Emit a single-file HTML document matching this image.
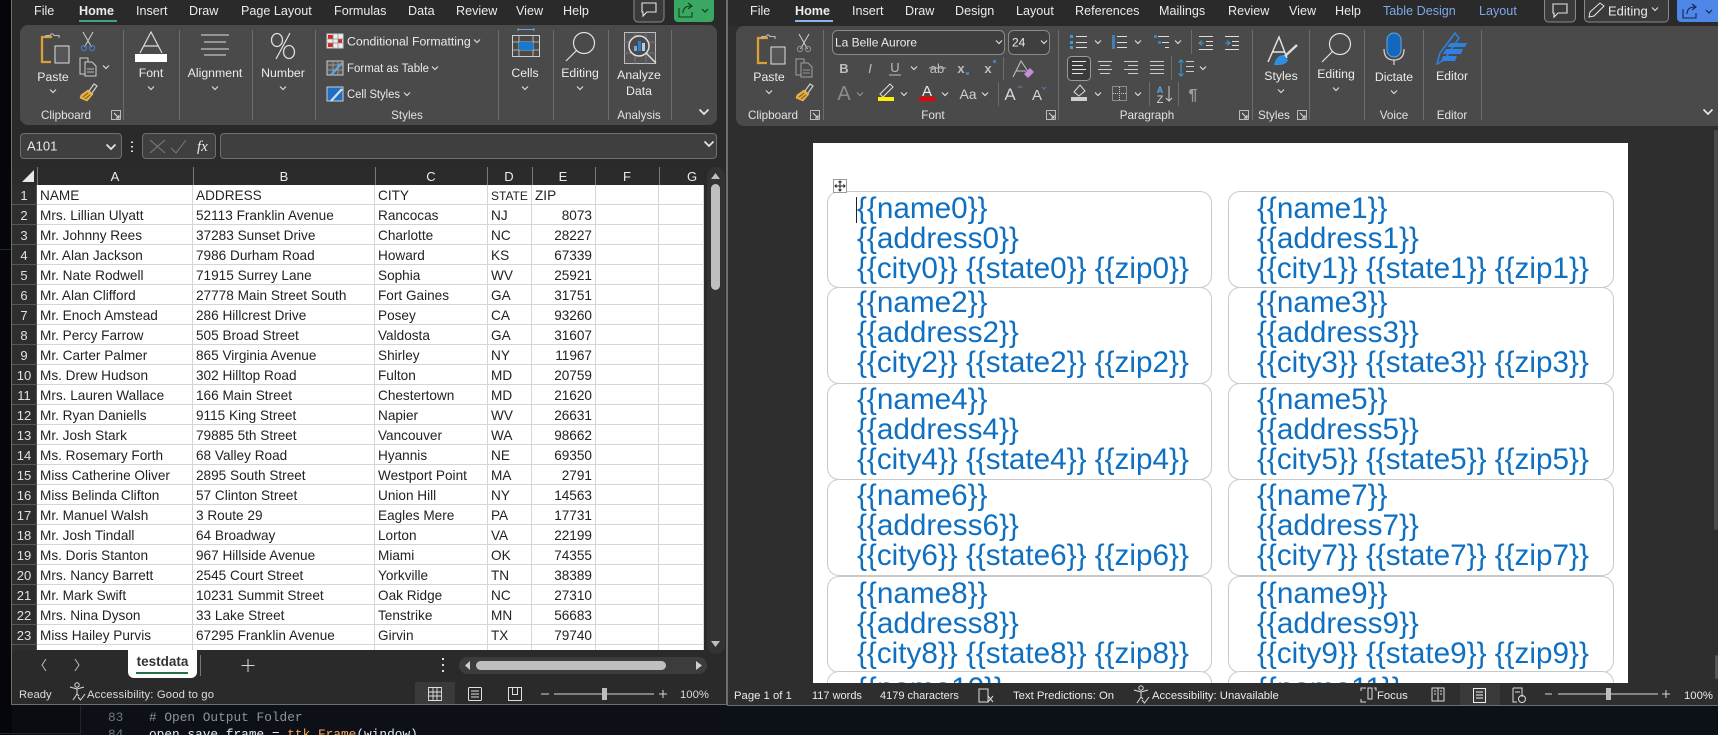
<!DOCTYPE html>
<html lang="en"><head><meta charset="utf-8"><title>Excel and Word</title>
<style>
html,body{margin:0;padding:0;background:#0c1118;width:1718px;height:735px;overflow:hidden}
body{position:relative;font-family:"Liberation Sans",sans-serif}
.a{position:absolute}
table{border-collapse:separate;border-spacing:0;table-layout:fixed;position:absolute;left:0;top:0;width:692px}
tr{height:20px}
td{height:20px;padding:3px 0 0 3px;font-size:13.6px;line-height:16px;color:#222;border-right:1px solid #d5d5d5;border-bottom:1px solid #d5d5d5;white-space:nowrap;overflow:hidden;box-sizing:border-box;vertical-align:top}
td.n{background:#2e2e2e;color:#e2e2e2;text-align:center;padding:3px 0 0 0;border-right:1px solid #555;border-bottom:1px solid #555;font-size:13px}
td.r{text-align:right;padding:3px 3px 0 0}
.lab{position:absolute;border:1px solid #c9c9c9;border-radius:12px;box-sizing:border-box;background:#fff}
.t{position:absolute;font-size:29.7px;line-height:30px;color:#0f6fc0;white-space:pre}
svg text{font-family:"Liberation Sans",sans-serif;fill:#ebebeb}
.tab{font-size:12.6px}.ui{font-size:12.3px}.gl{font-size:11.7px;fill:#e2e2e2}.st{font-size:11.3px;fill:#dcdcdc}
.m{text-anchor:middle}
.mono{font-family:"Liberation Mono",monospace!important;font-size:12.8px}
</style></head><body>

<!-- base backgrounds -->
<div class="a" style="left:0;top:0;width:12px;height:735px;background:#04060a"></div>
<div class="a" style="left:0;top:249px;width:12px;height:1px;background:#23272e"></div>
<div class="a" style="left:12px;top:705px;width:68px;height:30px;background:#090c11"></div>
<div class="a" style="left:80px;top:705px;width:647px;height:30px;background:#0d1117;border-left:1px solid #21262d"></div>
<div class="a" style="left:0;top:733px;width:80px;height:1px;background:#23272e"></div>

<!-- Excel window -->
<div class="a" style="left:11px;top:0;width:716px;height:705px;background:#2a2a2a;border:solid #6e6e6e;border-width:0 1px 1px 1px;box-sizing:border-box"></div>
<div class="a" style="left:20px;top:25px;width:697px;height:100px;background:#4a4a4a;border-radius:8px"></div>
<div class="a" style="left:20px;top:133px;width:102px;height:26px;background:#3f3f3f;border:1px solid #6f6f6f;border-radius:4px;box-sizing:border-box"></div>
<div class="a" style="left:142px;top:133px;width:74px;height:26px;background:#3f3f3f;border:1px solid #6f6f6f;border-radius:4px;box-sizing:border-box"></div>
<div class="a" style="left:220px;top:133px;width:497px;height:26px;background:#3f3f3f;border:1px solid #6f6f6f;border-radius:4px;box-sizing:border-box"></div>

<!-- grid -->
<div class="a" style="left:12px;top:167px;width:692px;height:18px;background:#2b2b2b"></div>
<div class="a" style="left:12px;top:185px;width:692px;height:465px;overflow:hidden;background:#fff">
<table><colgroup><col style="width:25px"><col style="width:156px"><col style="width:182px"><col style="width:113px"><col style="width:44px"><col style="width:64px"><col style="width:63px"><col style="width:45px"></colgroup>
<tr><td class="n">1</td><td>NAME</td><td>ADDRESS</td><td>CITY</td><td style="font-size:12px">STATE</td><td>ZIP</td><td></td><td></td></tr>
<tr><td class="n">2</td><td>Mrs. Lillian Ulyatt</td><td>52113 Franklin Avenue</td><td>Rancocas</td><td>NJ</td><td class="r">8073</td><td></td><td></td></tr>
<tr><td class="n">3</td><td>Mr. Johnny Rees</td><td>37283 Sunset Drive</td><td>Charlotte</td><td>NC</td><td class="r">28227</td><td></td><td></td></tr>
<tr><td class="n">4</td><td>Mr. Alan Jackson</td><td>7986 Durham Road</td><td>Howard</td><td>KS</td><td class="r">67339</td><td></td><td></td></tr>
<tr><td class="n">5</td><td>Mr. Nate Rodwell</td><td>71915 Surrey Lane</td><td>Sophia</td><td>WV</td><td class="r">25921</td><td></td><td></td></tr>
<tr><td class="n">6</td><td>Mr. Alan Clifford</td><td>27778 Main Street South</td><td>Fort Gaines</td><td>GA</td><td class="r">31751</td><td></td><td></td></tr>
<tr><td class="n">7</td><td>Mr. Enoch Amstead</td><td>286 Hillcrest Drive</td><td>Posey</td><td>CA</td><td class="r">93260</td><td></td><td></td></tr>
<tr><td class="n">8</td><td>Mr. Percy Farrow</td><td>505 Broad Street</td><td>Valdosta</td><td>GA</td><td class="r">31607</td><td></td><td></td></tr>
<tr><td class="n">9</td><td>Mr. Carter Palmer</td><td>865 Virginia Avenue</td><td>Shirley</td><td>NY</td><td class="r">11967</td><td></td><td></td></tr>
<tr><td class="n">10</td><td>Ms. Drew Hudson</td><td>302 Hilltop Road</td><td>Fulton</td><td>MD</td><td class="r">20759</td><td></td><td></td></tr>
<tr><td class="n">11</td><td>Mrs. Lauren Wallace</td><td>166 Main Street</td><td>Chestertown</td><td>MD</td><td class="r">21620</td><td></td><td></td></tr>
<tr><td class="n">12</td><td>Mr. Ryan Daniells</td><td>9115 King Street</td><td>Napier</td><td>WV</td><td class="r">26631</td><td></td><td></td></tr>
<tr><td class="n">13</td><td>Mr. Josh Stark</td><td>79885 5th Street</td><td>Vancouver</td><td>WA</td><td class="r">98662</td><td></td><td></td></tr>
<tr><td class="n">14</td><td>Ms. Rosemary Forth</td><td>68 Valley Road</td><td>Hyannis</td><td>NE</td><td class="r">69350</td><td></td><td></td></tr>
<tr><td class="n">15</td><td>Miss Catherine Oliver</td><td>2895 South Street</td><td>Westport Point</td><td>MA</td><td class="r">2791</td><td></td><td></td></tr>
<tr><td class="n">16</td><td>Miss Belinda Clifton</td><td>57 Clinton Street</td><td>Union Hill</td><td>NY</td><td class="r">14563</td><td></td><td></td></tr>
<tr><td class="n">17</td><td>Mr. Manuel Walsh</td><td>3 Route 29</td><td>Eagles Mere</td><td>PA</td><td class="r">17731</td><td></td><td></td></tr>
<tr><td class="n">18</td><td>Mr. Josh Tindall</td><td>64 Broadway</td><td>Lorton</td><td>VA</td><td class="r">22199</td><td></td><td></td></tr>
<tr><td class="n">19</td><td>Ms. Doris Stanton</td><td>967 Hillside Avenue</td><td>Miami</td><td>OK</td><td class="r">74355</td><td></td><td></td></tr>
<tr><td class="n">20</td><td>Mrs. Nancy Barrett</td><td>2545 Court Street</td><td>Yorkville</td><td>TN</td><td class="r">38389</td><td></td><td></td></tr>
<tr><td class="n">21</td><td>Mr. Mark Swift</td><td>10231 Summit Street</td><td>Oak Ridge</td><td>NC</td><td class="r">27310</td><td></td><td></td></tr>
<tr><td class="n">22</td><td>Mrs. Nina Dyson</td><td>33 Lake Street</td><td>Tenstrike</td><td>MN</td><td class="r">56683</td><td></td><td></td></tr>
<tr><td class="n">23</td><td>Miss Hailey Purvis</td><td>67295 Franklin Avenue</td><td>Girvin</td><td>TX</td><td class="r">79740</td><td></td><td></td></tr>
<tr><td class="n"></td><td></td><td></td><td></td><td></td><td></td><td></td><td></td></tr>
</table></div>

<!-- sheet tab / scrollbars -->
<div class="a" style="left:128px;top:650px;width:69px;height:28px;background:#fff;border-radius:0 0 6px 6px"></div>
<div class="a" style="left:136px;top:672px;width:52px;height:2px;background:#217346"></div>
<div class="a" style="left:128px;top:654px;width:69px;text-align:center;font-size:13.5px;font-weight:bold;color:#333">testdata</div>
<div class="a" style="left:459px;top:657px;width:248px;height:17px;background:#3c3c3c;border-radius:9px"></div>
<div class="a" style="left:476px;top:661px;width:190px;height:9px;background:#bfbfbf;border-radius:5px"></div>
<div class="a" style="left:707px;top:167px;width:18px;height:487px;background:#333;border-radius:9px"></div>
<div class="a" style="left:711px;top:184px;width:9px;height:106px;background:#bfbfbf;border-radius:5px"></div>
<div class="a" style="left:415px;top:682px;width:40px;height:22px;background:#3a3a3a"></div>

<!-- Word window -->
<div class="a" style="left:727px;top:0;width:991px;height:706px;background:#2e2e2e;border:solid #6e6e6e;border-width:0 0 1px 1px;box-sizing:border-box"></div>
<div class="a" style="left:728px;top:0;width:990px;height:26px;background:#2a2a2a"></div>
<div class="a" style="left:736px;top:26px;width:982px;height:100px;background:#4a4a4a;border-radius:8px 0 0 8px"></div>
<div class="a" style="left:813px;top:143px;width:815px;height:540px;background:#fff;overflow:hidden">
<div class="lab" style="left:14px;top:48px;width:385px;height:97px"></div><div class="lab" style="left:415px;top:48px;width:386px;height:97px"></div>
<div class="lab" style="left:14px;top:144px;width:385px;height:97px"></div><div class="lab" style="left:415px;top:144px;width:386px;height:97px"></div>
<div class="lab" style="left:14px;top:240px;width:385px;height:97px"></div><div class="lab" style="left:415px;top:240px;width:386px;height:97px"></div>
<div class="lab" style="left:14px;top:336px;width:385px;height:97px"></div><div class="lab" style="left:415px;top:336px;width:386px;height:97px"></div>
<div class="lab" style="left:14px;top:433px;width:385px;height:97px"></div><div class="lab" style="left:415px;top:433px;width:386px;height:97px"></div>
<div class="lab" style="left:14px;top:528px;width:385px;height:97px"></div><div class="lab" style="left:415px;top:528px;width:386px;height:97px"></div>
<div class="t" style="left:44px;top:51px">{{name0}}
{{address0}}
{{city0}} {{state0}} {{zip0}}</div>
<div class="t" style="left:444px;top:51px">{{name1}}
{{address1}}
{{city1}} {{state1}} {{zip1}}</div>
<div class="t" style="left:44px;top:145px">{{name2}}
{{address2}}
{{city2}} {{state2}} {{zip2}}</div>
<div class="t" style="left:444px;top:145px">{{name3}}
{{address3}}
{{city3}} {{state3}} {{zip3}}</div>
<div class="t" style="left:44px;top:242px">{{name4}}
{{address4}}
{{city4}} {{state4}} {{zip4}}</div>
<div class="t" style="left:444px;top:242px">{{name5}}
{{address5}}
{{city5}} {{state5}} {{zip5}}</div>
<div class="t" style="left:44px;top:338px">{{name6}}
{{address6}}
{{city6}} {{state6}} {{zip6}}</div>
<div class="t" style="left:444px;top:338px">{{name7}}
{{address7}}
{{city7}} {{state7}} {{zip7}}</div>
<div class="t" style="left:44px;top:436px">{{name8}}
{{address8}}
{{city8}} {{state8}} {{zip8}}</div>
<div class="t" style="left:444px;top:436px">{{name9}}
{{address9}}
{{city9}} {{state9}} {{zip9}}</div>
<div class="t" style="left:44px;top:531px">{{name10}}</div>
<div class="t" style="left:444px;top:531px">{{name11}}</div>
<div class="a" style="left:43px;top:54px;width:1px;height:26px;background:#222"></div>
<div class="a" style="left:20px;top:36px;width:14px;height:14px;border:1px solid #999;box-sizing:border-box;background:#fff"></div>
<svg class="a" style="left:20px;top:36px" width="14" height="14"><path d="M7 2V12M2 7H12M5.500 3.500L7 2L8.500 3.500M5.500 10.500L7 12L8.500 10.500M3.500 5.500L2 7L3.500 8.500M10.500 5.500L12 7L10.500 8.500" fill="none" stroke="#222" stroke-width="1"/></svg>
</div>
<div class="a" style="left:1460px;top:684px;width:40px;height:21px;background:#3a3a3a"></div>
<div class="a" style="left:1714px;top:130px;width:4px;height:400px;background:#4a4a4a;border-radius:2px"></div>
<div class="a" style="left:1715px;top:655px;width:3px;height:24px;background:#555;border-radius:2px"></div>

<!-- Overlay: chrome text and icons -->
<svg class="a" style="left:0;top:0" width="1718" height="735" viewBox="0 0 1718 735">
<defs>
<path id="c" d="M-3 -1.500L0 1.500L3 -1.500" fill="none" stroke="#d8d8d8" stroke-width="1.200"/>
<path id="c2" d="M-4.500 -2.500L0 2L4.500 -2.500" fill="none" stroke="#e6e6e6" stroke-width="1.700"/>
<g id="lch"><path d="M-4.500 -4.500H4.500V4.500M-4.500 -4.500V4.500H4.500" fill="none" stroke="#bbb" stroke-width="1"/><path d="M-2 -2L3 3M0 3H3V0" fill="none" stroke="#ddd" stroke-width="1"/></g>
<g id="cut"><path d="M-5 -11L3.500 4M5 -11L-3.500 4" fill="none" stroke="#c8c8c8" stroke-width="1.100"/></g>
<g id="copy"><path d="M-8 -9H0L0 7H-8Z" fill="none" stroke="#cfcfcf"/><path d="M-3 -5H4L8 -1V9H-3Z" fill="#4a4a4a" stroke="#cfcfcf"/><path d="M-1 2H6M-1 5H6" stroke="#bbb"/></g>
<g id="brush"><path d="M1 -2L6 -9L9 -7L4 0" fill="none" stroke="#cfcfcf" stroke-width="1.200"/><path d="M-7 2L0 -3L5 1L-1 8L-8 5Z" fill="#e6a938" stroke="#f3c76a" stroke-width=".6"/><path d="M-5 4L0 0M-3 6L2 2" stroke="#7a5b22"/></g>
<g id="paste"><path d="M10 -12H0V13H9" fill="none" stroke="#dca032" stroke-width="2.300"/><path d="M4 -11V-13.500H8Q10 -17 12 -13.500H17V-11" fill="none" stroke="#bdbdbd" stroke-width="1.100"/><rect x="13" y="-3" width="14" height="17" fill="#555" stroke="#e0e0e0"/></g>
<g id="mag"><circle cx="0" cy="0" r="10.500" fill="none" stroke="#e2e2e2" stroke-width="1.200"/><path d="M-7.500 7.500L-18 18" fill="none" stroke="#e2e2e2" stroke-width="1.200"/></g>
<g id="cmt"><path d="M-7 -6H7V3H-2L-6 7V3H-7Z" fill="none" stroke="#e6e6e6" stroke-width="1.100"/></g>
<g id="shr"><path d="M-7 -2V7H6V2" fill="none" stroke="currentColor" stroke-width="1.100"/><path d="M-3 3Q-3 -4 5 -4M2 -7L6 -4L2 -1" fill="none" stroke="currentColor" stroke-width="1.100"/></g>
<g id="acc"><circle cx="0" cy="-7" r="2.200" fill="none" stroke="#ddd"/><path d="M-7 -5L0 -3L7 -5M0 -3V2L-4 8M0 2L2 4" fill="none" stroke="#ddd"/><path d="M1 5L3.500 8L8 2" fill="none" stroke="#ddd"/></g>
</defs>

<!-- Excel tabs -->
<g class="tab">
<text x="34" y="15">File</text><text x="79" y="15" font-weight="bold">Home</text><text x="136" y="15">Insert</text><text x="189" y="15">Draw</text><text x="241" y="15">Page Layout</text><text x="334" y="15">Formulas</text><text x="408" y="15">Data</text><text x="456" y="15">Review</text><text x="516" y="15">View</text><text x="563" y="15">Help</text>
</g>
<rect x="79" y="20" width="38" height="2" fill="#46a37a"/>
<rect x="634" y="-3" width="30" height="25" rx="4" fill="#3a3a3a" stroke="#8a8a8a"/>
<use href="#cmt" x="649" y="9"/>
<rect x="674" y="-3" width="40" height="25" rx="4" fill="#3aa862"/>
<use href="#shr" x="686" y="10" color="#123f22"/><path d="M702 9L705 12L708 9" fill="none" stroke="#123f22" stroke-width="1.200"/>

<!-- Excel ribbon separators -->
<path d="M123.500 30V120M179.500 30V120M252.500 30V120M315.500 30V120M498.500 30V120M553.500 30V120M608.500 30V120M671.500 30V120" stroke="#6d6d6d"/>

<!-- Excel Clipboard -->
<use href="#paste" x="42" y="49"/>
<text class="ui m" x="53" y="81">Paste</text><use href="#c" x="53" y="91"/>
<use href="#cut" x="88" y="43"/><circle cx="84" cy="48" r="2.600" fill="none" stroke="#3f7fbf" stroke-width="1.300"/><circle cx="92" cy="48" r="2.600" fill="none" stroke="#3f7fbf" stroke-width="1.300"/>
<use href="#copy" x="88" y="67"/><use href="#c" x="106" y="67"/>
<use href="#brush" x="88" y="93"/>
<text class="gl m" x="66" y="119">Clipboard</text><use href="#lch" x="116" y="115"/>

<!-- Excel Font / Align / Number -->
<path d="M140 53L151 32L162 53M144 46H158" fill="none" stroke="#dcdcdc" stroke-width="1.200"/><rect x="135" y="54" width="32" height="8" fill="#fff"/>
<text class="ui m" x="151" y="77">Font</text><use href="#c" x="151" y="88"/>
<path d="M201 35H229M204 42H226M201 49H229M204 55H226" stroke="#e0e0e0" fill="none"/>
<text class="ui m" x="215" y="77">Alignment</text><use href="#c" x="215" y="88"/>
<path d="M290 33L276 59" stroke="#dcdcdc" stroke-width="1.300" fill="none"/><ellipse cx="277" cy="40" rx="5.500" ry="6.500" fill="none" stroke="#dcdcdc" stroke-width="1.300"/><ellipse cx="289" cy="52" rx="5.500" ry="6.500" fill="none" stroke="#dcdcdc" stroke-width="1.300"/>
<text class="ui m" x="283" y="77">Number</text><use href="#c" x="283" y="88"/>

<!-- Excel Styles -->
<rect x="327" y="34" width="16" height="14" fill="#eee" stroke="#ccc"/><rect x="328" y="35" width="5" height="4" fill="#d22"/><rect x="338" y="39" width="4" height="4" fill="#d22"/><rect x="328" y="43" width="5" height="4" fill="#d22"/><path d="M333 34V48M338 34V48M327 39H343M327 43H343" stroke="#888" stroke-width=".7"/>
<text class="ui" x="347" y="45.500">Conditional Formatting</text><use href="#c" x="477" y="41"/>
<rect x="327" y="61" width="16" height="14" fill="#5a5a5a" stroke="#ccc"/><path d="M327 65H343M333 61V75M338 61V75M327 70H343" stroke="#aaa" stroke-width=".7"/><path d="M331 75L342 63" stroke="#5fa8e8" stroke-width="2.200"/>
<text class="ui" x="347" y="72" textLength="82" lengthAdjust="spacingAndGlyphs">Format as Table</text><use href="#c" x="435" y="68"/>
<rect x="327" y="87" width="16" height="14" fill="#1f6fc4" stroke="#ccc"/><path d="M331 101L342 89" stroke="#cfe0f2" stroke-width="2.200"/>
<text class="ui" x="347" y="98" textLength="53" lengthAdjust="spacingAndGlyphs">Cell Styles</text><use href="#c" x="407" y="94"/>
<text class="gl m" x="407" y="119">Styles</text>

<!-- Excel Cells / Editing / Analyze -->
<path d="M518 29.500H534M518 28V31M534 28V31" stroke="#6aa6dc" fill="none"/>
<rect x="512.500" y="35.500" width="27" height="21" fill="none" stroke="#cfcfcf"/><path d="M512 42H540M512 50H540M519 35V57M533 35V57" stroke="#cfcfcf" stroke-width=".8"/><rect x="519" y="42" width="14" height="8" fill="#1678cf"/>
<text class="ui m" x="525" y="77">Cells</text><use href="#c" x="525" y="88"/>
<use href="#mag" x="584" y="43"/>
<text class="ui m" x="580" y="77">Editing</text><use href="#c" x="580" y="88"/>
<rect x="624.500" y="32.500" width="31" height="31" fill="#555" stroke="#bdbdbd"/><path d="M624 42H656M624 53H656M635 32V64M646 32V64" stroke="#808080" stroke-width=".8"/>
<circle cx="639" cy="46" r="10" fill="#4a4a4a" stroke="#e0e0e0" stroke-width="1.500"/><rect x="634" y="46" width="3" height="5" fill="#7aa7d8"/><rect x="638" y="41" width="3" height="10" fill="#2f7fd0"/><rect x="642" y="43" width="3" height="8" fill="#bcd"/><path d="M646 53L656 63" stroke="#e0e0e0" stroke-width="1.500"/>
<text class="ui m" x="639" y="79">Analyze</text><text class="ui m" x="639" y="95">Data</text><text class="gl m" x="639" y="119">Analysis</text>
<use href="#c2" x="704" y="112"/>

<!-- Excel formula bar -->
<text x="27" y="150.500" style="font-size:13px">A101</text><use href="#c2" x="111" y="147"/>
<path d="M132 141.500V143M132 146V147.500M132 150.500V152" stroke="#ddd" stroke-width="2"/>
<path d="M150 140L165 153M165 140L150 153" stroke="#7d7d7d" fill="none"/><path d="M171 148L176 153L186 140" stroke="#7d7d7d" fill="none"/>
<text x="197" y="151" style="font-family:'Liberation Serif',serif;font-style:italic;font-size:15px">fx</text>
<use href="#c2" x="709" y="144"/>

<!-- Excel headers -->
<path d="M22 182H34V170Z" fill="#e8e8e8"/>
<path d="M37.500 167V185M193.500 167V185M375.500 167V185M487.500 167V185M532.500 167V185M595.500 167V185M659.500 167V185" stroke="#7a7a7a"/>
<g style="font-size:13px">
<text class="m" x="115" y="181">A</text><text class="m" x="284" y="181">B</text><text class="m" x="431" y="181">C</text><text class="m" x="509" y="181">D</text><text class="m" x="563" y="181">E</text><text class="m" x="627" y="181">F</text><text class="m" x="692" y="181">G</text>
</g>
<path d="M711 179L715.500 173L720 179Z" fill="#bfbfbf"/><path d="M711 641L715.500 647L720 641Z" fill="#bfbfbf"/>

<!-- Excel tabs row -->
<path d="M46 659L42 665L46 671M75 659L79 665L75 671" fill="none" stroke="#bbb"/>
<path d="M200.500 655V676" stroke="#777"/><path d="M248 659V672M241.500 665.500H254.500" stroke="#d5d5d5"/>
<path d="M443 658V660M443 664V666M443 670V672" stroke="#ddd" stroke-width="2"/>
<path d="M470 661L465 665.500L470 670Z" fill="#cfcfcf"/><path d="M696 661L702 665.500L696 670Z" fill="#cfcfcf"/>

<!-- Excel status -->
<text class="st" x="19" y="698">Ready</text><use href="#acc" x="77" y="692"/><text class="st" x="87" y="698" textLength="127">Accessibility: Good to go</text>
<path d="M428.500 687.500H441.500V700.500H428.500ZM428 692H442M428 696H442M433 687V701M437 687V701" fill="none" stroke="#e0e0e0" stroke-width=".9"/>
<rect x="468.500" y="687.500" width="13" height="13" rx="1" fill="none" stroke="#e0e0e0"/><path d="M471 691H479M471 694H479M471 697H479" stroke="#e0e0e0"/>
<path d="M508.500 687.500H521.500V700.500H508.500ZM512.500 687.500V694.500H517.500V687.500" fill="none" stroke="#e0e0e0"/>
<path d="M541 694H549M554 694H654M659 694H667M663 690V698" stroke="#d5d5d5" fill="none"/><rect x="602" y="688" width="5" height="12" fill="#bdbdbd"/>
<text class="st" x="680" y="698">100%</text>

<!-- Code -->
<text class="mono" x="108" y="721" style="fill:#6e7681">83</text><text class="mono" x="149" y="721" style="fill:#8b949e"># Open Output Folder</text>
<text class="mono" x="108" y="738" style="fill:#6e7681">84</text><text class="mono" x="149" y="738" style="fill:#e6edf3">open_save_frame = <tspan style="fill:#ffa657">ttk</tspan>.<tspan style="fill:#ffa657">Frame</tspan>(window)</text>

<!-- Word tabs -->
<g class="tab">
<text x="750" y="15">File</text><text x="795" y="15" font-weight="bold">Home</text><text x="852" y="15">Insert</text><text x="905" y="15">Draw</text><text x="955" y="15">Design</text><text x="1016" y="15">Layout</text><text x="1075" y="15">References</text><text x="1159" y="15">Mailings</text><text x="1228" y="15">Review</text><text x="1289" y="15">View</text><text x="1335" y="15">Help</text>
<text x="1383" y="15" style="fill:#7fa8e6">Table Design</text><text x="1479" y="15" style="fill:#7fa8e6">Layout</text>
</g>
<rect x="795" y="20" width="38" height="2" fill="#8cb4f0"/>
<rect x="1544.500" y="-3" width="31" height="25" rx="4" fill="#3a3a3a" stroke="#8a8a8a"/><use href="#cmt" x="1560" y="10"/>
<rect x="1584.500" y="-3" width="84" height="25" rx="4" fill="#3a3a3a" stroke="#8a8a8a"/>
<path d="M1589 17L1590 12L1600 3L1604 6L1594 16Z" fill="none" stroke="#e6e6e6"/><text x="1608" y="15.500" style="font-size:13px">Editing</text><use href="#c" x="1655" y="9"/>
<rect x="1677" y="-3" width="48" height="25" rx="4" fill="#4f86e8"/><use href="#shr" x="1690" y="11" color="#10284f"/><path d="M1706 10L1709 13L1712 10" fill="none" stroke="#10284f" stroke-width="1.200"/>

<!-- Word seps -->
<path d="M823.500 30V120M1058.500 30V120M1252.500 30V120M1309.500 30V120M1364.500 30V120M1423.500 30V120M1481.500 30V120" stroke="#6d6d6d"/>
<path d="M1003.500 57V80M998.500 82V106M1191.500 30V54M1171.500 56V80M1149.500 82V106M1178.500 82V106" stroke="#6d6d6d"/>

<!-- Word Clipboard -->
<use href="#paste" x="758" y="50"/>
<text class="ui m" x="769" y="81">Paste</text><use href="#c" x="769" y="92"/>
<use href="#cut" x="804" y="45"/><circle cx="800" cy="49" r="2.600" fill="none" stroke="#8a8a8a" stroke-width="1.200"/><circle cx="808" cy="49" r="2.600" fill="none" stroke="#8a8a8a" stroke-width="1.200"/>
<g opacity=".65"><use href="#copy" x="804" y="68"/></g>
<use href="#brush" x="804" y="93"/>
<text class="gl m" x="773" y="119">Clipboard</text><use href="#lch" x="815" y="115"/>

<!-- Word Font -->
<rect x="832.500" y="30.500" width="172" height="24" rx="5" fill="#3f3f3f" stroke="#8a8a8a"/><rect x="1008.500" y="30.500" width="41" height="24" rx="5" fill="#3f3f3f" stroke="#8a8a8a"/>
<text x="835" y="46.500" style="font-size:12px">La Belle Aurore</text><use href="#c" x="999" y="42"/>
<text x="1012" y="46.500" style="font-size:12px">24</text><use href="#c" x="1044" y="42"/>
<g style="font-size:13px">
<text class="m" x="844" y="73" font-weight="bold" style="fill:#bdbdbd">B</text>
<text class="m" x="870" y="73" font-style="italic" style="fill:#bdbdbd">I</text>
<text class="m" x="895" y="72" style="fill:#bdbdbd">U</text>
<text class="m" x="937" y="73" style="fill:#bdbdbd">ab</text>
<text class="m" x="961" y="73" font-weight="bold" style="fill:#bdbdbd">x</text>
<text class="m" x="988" y="73" font-weight="bold" style="fill:#bdbdbd">x</text>
</g>
<path d="M889 75H901M929 68H946" stroke="#bdbdbd"/><use href="#c" x="914" y="68"/>
<rect x="966" y="72" width="3" height="3" fill="#4d7fae"/><rect x="993" y="60" width="3" height="3" fill="#4d7fae"/>
<path d="M1013 77L1021 61L1029 73M1016 71H1026" fill="none" stroke="#bdbdbd" stroke-width="1.100"/><path d="M1024 74L1030 68L1034 72L1028 78Z" fill="#c58ed8"/>
<text class="m" x="844" y="100" style="font-size:20px;fill:#8c8c8c">A</text><use href="#c" x="860" y="94" style="opacity:.5"/>
<path d="M880 94L890 84L893 87L883 97Z" fill="none" stroke="#ddd"/><rect x="878" y="97" width="16" height="4" fill="#ffef00"/><use href="#c" x="904" y="94"/>
<text class="m" x="927" y="96" style="font-size:15px">A</text><rect x="919" y="97" width="16" height="4" fill="#e00"/><use href="#c" x="945" y="94"/>
<text class="m" x="968" y="99" style="font-size:14px;fill:#cfcfcf">Aa</text><use href="#c" x="985" y="94"/>
<text class="m" x="1010" y="100" style="font-size:17px;fill:#d5d5d5">A</text><path d="M1018 88L1020 86L1022 88" stroke="#4d7fae" fill="none"/>
<text class="m" x="1037" y="100" style="font-size:15px;fill:#d5d5d5">A</text><path d="M1042 87L1044 89L1046 87" stroke="#4d7fae" fill="none"/>
<text class="gl m" x="933" y="119">Font</text><use href="#lch" x="1051" y="115"/>

<!-- Word Paragraph -->
<rect x="1070" y="35" width="3" height="3" fill="#3e9bd8"/><rect x="1070" y="41" width="3" height="3" fill="#3e9bd8"/><rect x="1070" y="46" width="3" height="3" fill="#3e9bd8"/><path d="M1076 36.500H1087M1076 42.500H1087M1076 47.500H1087" stroke="#ddd"/><use href="#c" x="1098" y="42"/>
<rect x="1112" y="35" width="3" height="14" fill="#3e7fb8"/><path d="M1117 36.500H1127M1117 42.500H1127M1117 47.500H1127" stroke="#ddd"/><use href="#c" x="1138" y="42"/>
<rect x="1154" y="35" width="3" height="3" fill="#3e7fb8"/><rect x="1158" y="41" width="3" height="3" fill="#3e7fb8"/><path d="M1158 36.500H1169M1162 42.500H1169M1165 47.500H1169" stroke="#ddd"/><use href="#c" x="1178" y="42"/>
<path d="M1199 36.500H1213M1206 41.500H1213M1206 45.500H1213M1199 49.500H1213" stroke="#ddd"/><path d="M1204 43H1199M1202 40.500L1199 43L1202 45.500" stroke="#3e9bd8" fill="none"/>
<path d="M1225 36.500H1239M1232 41.500H1239M1232 45.500H1239M1225 49.500H1239" stroke="#ddd"/><path d="M1225 43H1230M1227 40.500L1230 43L1227 45.500" stroke="#3e9bd8" fill="none"/>
<rect x="1067.500" y="56.500" width="23" height="24" rx="4" fill="#3b3b3b" stroke="#9a9a9a"/>
<path d="M1072 61.500H1086M1072 65.500H1083M1072 69.500H1086M1072 73.500H1083" stroke="#e6e6e6"/>
<path d="M1098 61.500H1112M1100 65.500H1110M1098 69.500H1112M1100 73.500H1110" stroke="#ccc"/>
<path d="M1124 61.500H1138M1128 65.500H1138M1124 69.500H1138M1128 73.500H1138" stroke="#ccc"/>
<path d="M1150 61.500H1164M1150 65.500H1164M1150 69.500H1164M1150 73.500H1164" stroke="#ccc"/>
<path d="M1181 60V76M1178.500 62.500L1181 60L1183.500 62.500M1178.500 73.500L1181 76L1183.500 73.500" stroke="#3e9bd8" fill="none"/><path d="M1186 61.500H1194M1186 66.500H1194M1186 71.500H1194" stroke="#ccc"/><use href="#c" x="1203" y="68"/>
<rect x="1071" y="97" width="16" height="4" fill="#cfcfcf"/><path d="M1074 92L1080 85L1085 91L1079 96Z" fill="none" stroke="#ddd"/><use href="#c" x="1098" y="94"/>
<rect x="1112.500" y="86.500" width="14" height="14" fill="none" stroke="#ccc" stroke-dasharray="1 1"/><path d="M1119.500 87V101M1113 93.500H1126" stroke="#ccc" stroke-dasharray="1 1"/><use href="#c" x="1138" y="94"/>
<text class="m" x="1160" y="93" style="font-size:9px;font-weight:bold;fill:#5aa6e0">A</text><text class="m" x="1160" y="103" style="font-size:11px;fill:#d5d5d5">Z</text><path d="M1169 86V101M1166 98L1169 101L1172 98" stroke="#ccc" fill="none"/>
<text class="m" x="1193" y="100" style="font-size:16px;font-weight:bold;fill:#9c9c9c">¶</text>
<text class="gl m" x="1147" y="119">Paragraph</text><use href="#lch" x="1244" y="115"/>

<!-- Word Styles/Editing/Dictate/Editor -->
<path d="M1268 62L1279 37L1287 58M1272 52H1285" fill="none" stroke="#e6e6e6" stroke-width="1.400"/>
<path d="M1284 57L1297 45" stroke="#ddd" stroke-width="2.400"/><path d="M1274 65Q1276 55 1284 55L1288 60Q1286 66 1274 65Z" fill="#2d8fe0"/>
<text class="ui m" x="1281" y="80">Styles</text><use href="#c" x="1281" y="91"/>
<text class="gl" x="1258" y="119">Styles</text><use href="#lch" x="1302" y="115"/>
<use href="#mag" x="1340" y="44"/>
<text class="ui m" x="1336" y="78">Editing</text><use href="#c" x="1336" y="89"/>
<rect x="1387" y="33" width="14" height="24" rx="7" fill="#1268bd" stroke="#6aa6dc"/><path d="M1384 49Q1384 60 1394 60Q1404 60 1404 49M1394 60V65" stroke="#cfcfcf" fill="none" stroke-width="1.300"/>
<text class="ui m" x="1394" y="81">Dictate</text><use href="#c" x="1394" y="92"/>
<text class="gl m" x="1394" y="119">Voice</text>
<path d="M1437 64L1440 53L1455 33L1459 38L1444 60Z" fill="none" stroke="#2f80e0" stroke-width="1.500"/><path d="M1450 43H1467L1465 47H1447ZM1446 49H1463L1461 54H1443ZM1443 56H1457L1455 61H1441Z" fill="#2f80e0"/>
<text class="ui m" x="1452" y="80">Editor</text><text class="gl m" x="1452" y="119">Editor</text>
<use href="#c2" x="1708" y="112"/>

<!-- Word status -->
<g class="st">
<text x="734" y="699">Page 1 of 1</text><text x="812" y="699" style="font-size:11px">117 words</text><text x="880" y="699" style="font-size:11px">4179 characters</text><text x="1013" y="699">Text Predictions: On</text><text x="1152" y="699">Accessibility: Unavailable</text><text x="1377" y="699">Focus</text><text x="1684" y="699">100%</text>
</g>
<path d="M979 689H988V702H979ZM988 696L993 702M993 696L988 702" fill="none" stroke="#ddd"/>
<use href="#acc" x="1141" y="695"/>
<path d="M1361 691V688H1366M1374 688H1376V691M1361 699V702H1366M1368 688H1372V699H1368Z" fill="none" stroke="#ddd"/>
<path d="M1432 688H1444V701H1432ZM1438 688V701M1434 691H1436M1434 694H1436M1440 691H1442M1440 694H1442" fill="none" stroke="#ddd"/>
<path d="M1473.500 688.500H1485.500V702.500H1473.500ZM1476 692H1483M1476 695H1483M1476 698H1483" fill="none" stroke="#eee"/>
<path d="M1513 688H1522V697M1513 688V702H1517M1515 692H1520" fill="none" stroke="#ddd"/><circle cx="1522" cy="699" r="3.500" fill="none" stroke="#ddd"/>
<path d="M1545 694H1552M1558 694H1658M1662 694H1670M1666 690V698" stroke="#d5d5d5" fill="none"/><rect x="1606" y="688" width="5" height="12" fill="#bdbdbd"/>
</svg>
</body></html>
